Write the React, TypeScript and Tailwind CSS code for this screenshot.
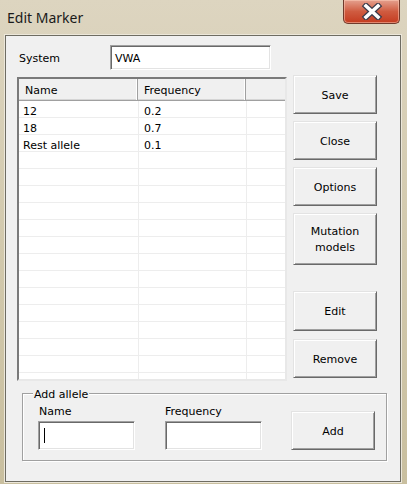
import React from "react";

const ui = { fontFamily: '"DejaVu Sans", Tahoma, sans-serif' };

function Btn({ children, h, className = "" }: { children: React.ReactNode; h: string; className?: string }) {
  return (
    <div
      className={`w-[84px] ${h} pt-[2px] flex items-center justify-center text-center text-[11px] leading-[16px] text-[#000] bg-[#f0f0f0] border border-t-[#e3e3e3] border-l-[#e3e3e3] border-r-[#696969] border-b-[#696969] shadow-[inset_1px_1px_0_#ffffff,inset_-1px_-1px_0_#a0a0a0] ${className}`}
    >
      {children}
    </div>
  );
}

const rows = [
  ["12", "0.2"],
  ["18", "0.7"],
  ["Rest allele", "0.1"],
];

export default function App() {
  const allRows = Array.from({ length: 17 }, (_, i) => rows[i] ?? ["", ""]);
  return (
    <div
      className="w-[407px] h-[484px] flex flex-col bg-gradient-to-b from-[#ddd5c0] via-[#d2c9ad] to-[#c9bf9f] overflow-hidden"
      style={ui}
    >
      {/* Title bar */}
      <div className="h-[35px] flex items-start shrink-0">
        <div
          className="pl-[7px] pt-[8px] text-[14px] leading-[19px] text-[#1a1a1a]"
          style={{ fontFamily: '"Noto Sans", "Open Sans", sans-serif' }}
        >
          Edit Marker
        </div>
        <div className="ml-auto mr-[7px] w-[57px] h-[24px] rounded-b-[5px] border border-t-0 border-[#6f3a2c] bg-gradient-to-b from-[#e4a08e] via-[#cf5b40] to-[#c43a1e] flex items-center justify-center shadow-[inset_0_0_0_1px_rgba(255,210,190,0.5)]">
          <svg width="22" height="17" viewBox="0 0 22 17">
            <path d="M5 3 L17 14 M17 3 L5 14" stroke="#3b3b4a" strokeWidth="6" strokeLinecap="square" />
            <path d="M5 3 L17 14 M17 3 L5 14" stroke="#ffffff" strokeWidth="3.6" strokeLinecap="square" />
          </svg>
        </div>
      </div>

      {/* Client area */}
      <div className="ml-[5px] mr-[6px] h-[447px] border border-[#6e6c62] bg-[#f0f0f0] flex flex-col text-[11px] text-[#000] shadow-[0_0_0_1px_#ece7da]">
        {/* System row */}
        <div className="flex items-center pt-[9px] pl-[13px]">
          <div className="w-[91px] pt-[4px] text-[11px]">System</div>
          <div className="w-[161px] h-[25px] flex items-center pl-[4px] pt-[4px] bg-white border border-t-[#a0a0a0] border-l-[#a0a0a0] border-r-white border-b-white shadow-[inset_1px_1px_0_#696969,inset_-1px_-1px_0_#e3e3e3]">
            VWA
          </div>
        </div>

        {/* Main row */}
        <div className="flex pl-[11px] mt-[5px]">
          <div className="mt-[2px] w-[270px] h-[304px] bg-white border-2 border-t-[#7a7a7a] border-l-[#7a7a7a] border-r-[#e8e8e8] border-b-[#e8e8e8] overflow-hidden flex flex-col">
            <div className="h-[22px] shrink-0 flex bg-[#f0f0f0] border-b border-[#a0a0a0] shadow-[inset_0_-1px_0_#d5d5d5]">
              <div className="w-[119px] pl-[6px] pt-[4px] flex items-center border-r border-[#a0a0a0] shadow-[inset_-1px_0_0_#fff]">Name</div>
              <div className="w-[108px] pl-[6px] pt-[4px] flex items-center border-r border-[#a0a0a0] shadow-[inset_-1px_0_0_#fff]">Frequency</div>
              <div className="flex-1" />
            </div>
            {allRows.map((r, i) => (
              <div key={i} className="h-[17px] shrink-0 flex border-b border-[#ededed]">
                <div className="w-[120px] pl-[4px] pt-[6px] flex items-center border-r border-[#ededed]">{r[0]}</div>
                <div className="w-[108px] pl-[5px] pt-[6px] flex items-center border-r border-[#ededed]">{r[1]}</div>
                <div className="flex-1" />
              </div>
            ))}
          </div>

          <div className="ml-[6px] flex flex-col">
            <Btn h="h-[39px]">Save</Btn>
            <Btn h="h-[39px]" className="mt-[7px]">Close</Btn>
            <Btn h="h-[39px]" className="mt-[7px]">Options</Btn>
            <Btn h="h-[52px]" className="mt-[7px]">
              Mutation
              <br />
              models
            </Btn>
            <Btn h="h-[40px]" className="mt-[26px]">Edit</Btn>
            <Btn h="h-[39px]" className="mt-[8px]">Remove</Btn>
          </div>
        </div>

        {/* Add allele group */}
        <div className="relative ml-[16px] mt-[12px] w-[365px] h-[68px] border border-[#a0a0a0] shadow-[inset_1px_1px_0_#fff,1px_1px_0_#fff]">
          <div className="absolute -top-[6px] left-[10px] px-[1px] bg-[#f0f0f0] leading-[14px]">Add allele</div>
          <div className="flex pl-[15px] pt-[11px]">
            <div className="flex flex-col w-[97px]">
              <div className="h-[14px] leading-[14px] pl-[1px]">Name</div>
              <div className="mt-[2px] h-[29px] flex items-center pl-[5px] bg-white border border-t-[#a0a0a0] border-l-[#a0a0a0] border-r-white border-b-white shadow-[inset_1px_1px_0_#696969,inset_-1px_-1px_0_#e3e3e3]">
                <div className="w-[1px] h-[15px] bg-black" />
              </div>
            </div>
            <div className="flex flex-col w-[97px] ml-[30px]">
              <div className="h-[14px] leading-[14px]">Frequency</div>
              <div className="mt-[2px] h-[29px] bg-white border border-t-[#a0a0a0] border-l-[#a0a0a0] border-r-white border-b-white shadow-[inset_1px_1px_0_#696969,inset_-1px_-1px_0_#e3e3e3]" />
            </div>
            <Btn h="h-[39px]" className="ml-[29px] mt-[6px]">Add</Btn>
          </div>
        </div>
      </div>
    </div>
  );
}
